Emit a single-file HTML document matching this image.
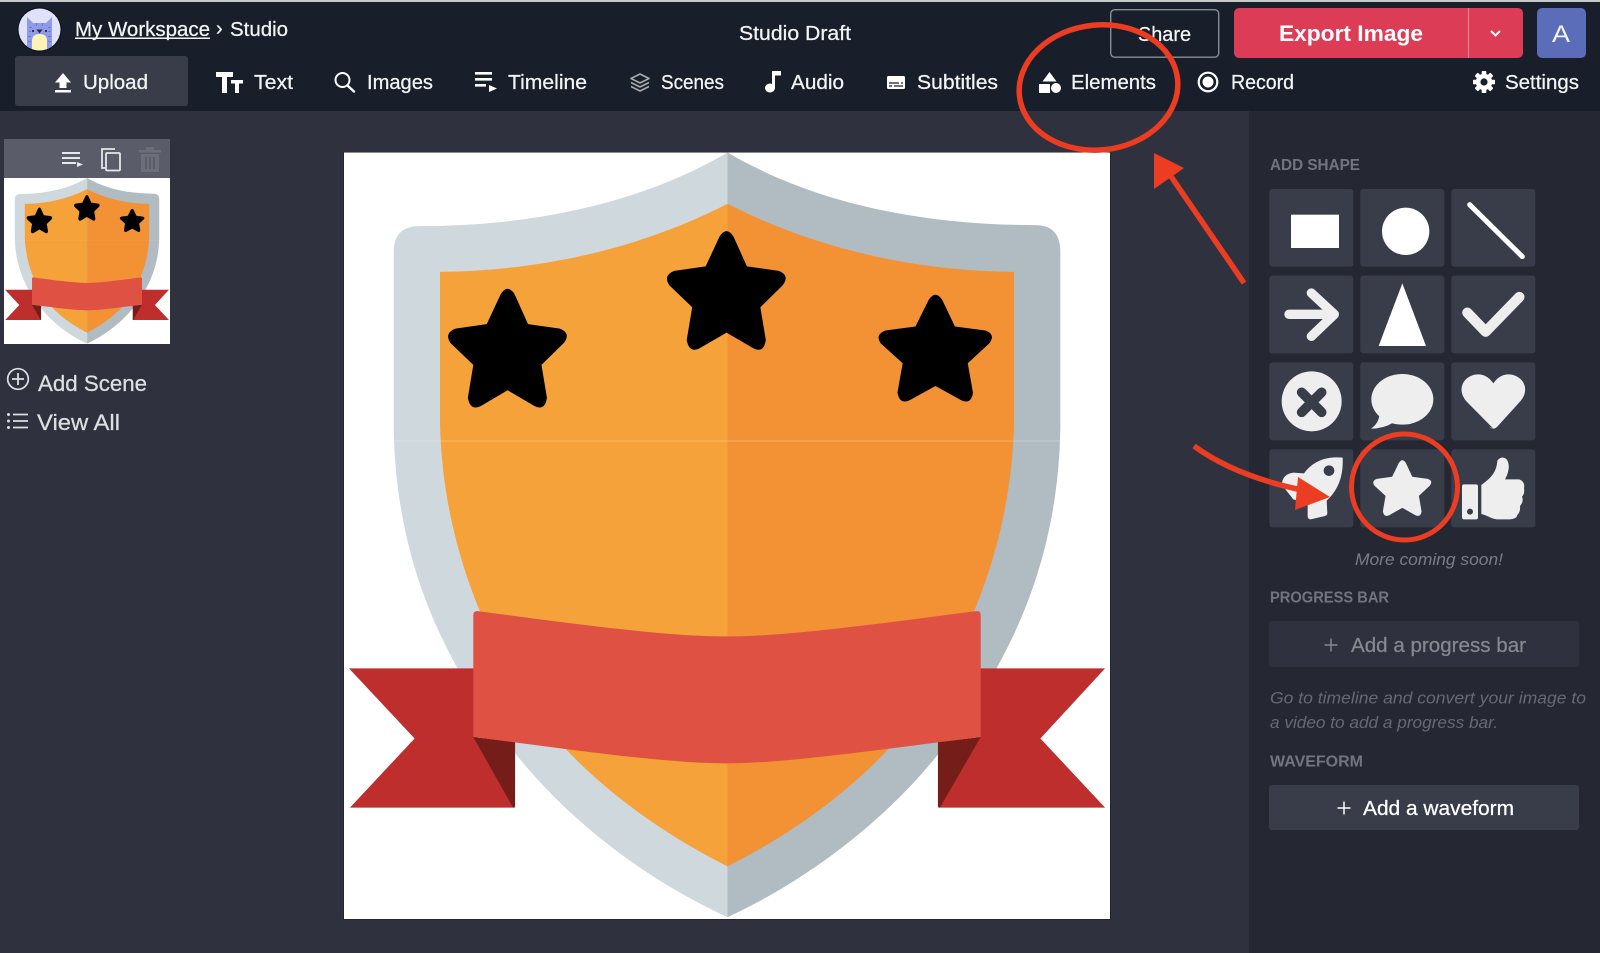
<!DOCTYPE html>
<html lang="en">
<head>
<meta charset="utf-8">
<title>Studio Draft</title>
<style>
html,body{margin:0;padding:0;width:1600px;height:953px;overflow:hidden;background:#2f323e}
svg{display:block}
text{font-family:"Liberation Sans",Arial,sans-serif;fill:#fff}
.n{font-size:20px;fill:#f4f4f5;stroke:#f4f4f5;stroke-width:.25px}
.l{font-size:16px;fill:#72757f;font-weight:700}
.i{font-size:17px;font-style:italic;fill:#666973}
</style>
</head>
<body>
<svg xmlns="http://www.w3.org/2000/svg" width="1600" height="953" viewBox="0 0 1600 953">
<defs>
<path id="st" d="M323 290Q337 268 351 290L378 350L442 359Q465 368 450 388L405 432L416 498Q412 526 390 514L337 483L284 514Q262 526 257 498L268 432L222 388Q209 368 232 359L295 350Z"/>
<g id="logo">
  <path fill="#cfd8dc" d="M779 5C600 110 380 153 160 153Q108 153 108 205L108 560C112 800 190 1010 350 1210C460 1350 620 1470 779 1542Z"/>
  <path fill="#b1bcc2" d="M779 5C958 110 1178 151 1398 151Q1448 151 1448 205L1448 560C1444 800 1366 1010 1206 1210C1096 1350 936 1470 779 1542Z"/>
  <path fill="#f5a23a" d="M779 108C600 200 400 243 201 245L201 550C205 720 250 880 330 1030C420 1210 600 1350 779 1440Z"/>
  <path fill="#f29234" d="M779 108C958 200 1158 243 1355 245L1355 550C1351 720 1306 880 1226 1030C1136 1210 958 1350 779 1440Z"/>
  <rect x="108" y="584" width="1340" height="2" fill="#fff" opacity=".25"/>
  <use href="#st"/>
  <use href="#st" x="440" y="-116"/>
  <use href="#st" transform="translate(1197 290) scale(.955 .9) translate(-337 -278)"/>
  <path fill="#bd2e2d" d="M18 1042H275V1180L352 1322H20L150 1183Z"/>
  <path fill="#bd2e2d" d="M1538 1042H1280V1180L1202 1322H1538L1408 1183Z"/>
  <path fill="#751d18" d="M268 1180L352 1190V1320L348 1322Z"/>
  <path fill="#751d18" d="M1288 1180L1202 1190V1320L1206 1322Z"/>
  <path fill="#df5142" d="M268 935Q268 926 277 927C450 950 650 978 779 978C900 978 1100 950 1279 927Q1288 926 1288 935V1180C1100 1203 900 1233 779 1233C650 1233 450 1203 268 1180Z"/>
</g>
<clipPath id="av"><circle cx="39.5" cy="29.5" r="21"/></clipPath>
</defs>

<!-- base panels -->
<rect width="1600" height="953" fill="#2f323e"/>
<rect x="1249" y="111" width="351" height="842" fill="#252833"/>
<rect width="1600" height="111" fill="#191e2b"/>
<rect width="1600" height="2" fill="#c9cacc"/>

<!-- avatar -->
<circle cx="39.5" cy="29.5" r="22" fill="#0d0f16"/>
<circle cx="39.5" cy="29.5" r="21" fill="#e0e2fb"/>
<g clip-path="url(#av)">
  <path fill="#8f9be8" d="M27 17L33 23H46L52 17V52H27Z"/>
  <path fill="#6a78d6" d="M29 27h3v1h-3zM29 31h2v1h-2zM48 27h3v1h-3zM48 31h3v1h-3zM36 23h1v3h-1zM42 23h1v3h-1zM28 36h3v1h-3zM48 36h3v1h-3zM28 41h3v1h-3zM48 41h3v1h-3z"/>
  <path fill="#fdf3b5" d="M32 52V41Q32 34 39.5 34T47 41V52Z"/>
  <path fill="#2a2a38" d="M36.500 29.500H42.500L39.5 33.5Z"/>
  <circle cx="33" cy="31" r="1.100" fill="#2a2a38"/><circle cx="46" cy="31" r="1.100" fill="#2a2a38"/>
</g>

<!-- row 1 -->
<text class="n" x="75" y="36" textLength="135" lengthAdjust="spacingAndGlyphs">My Workspace</text>
<rect x="75" y="37.5" width="135" height="1.5" fill="#f4f4f5"/>
<text class="n" x="216" y="35">›</text>
<text class="n" x="230" y="36" textLength="58" lengthAdjust="spacingAndGlyphs">Studio</text>
<text class="n" x="739" y="40" textLength="112" lengthAdjust="spacingAndGlyphs">Studio Draft</text>

<rect x="1110.7" y="9.7" width="108" height="47.5" rx="4" fill="none" stroke="#8b8d94" stroke-width="1.4"/>
<text class="n" x="1138" y="41" textLength="53" lengthAdjust="spacingAndGlyphs">Share</text>

<rect x="1234" y="8" width="289" height="50" rx="5" fill="#dd3c56"/>
<rect x="1468" y="8" width="1" height="50" fill="#ee8b9b"/>
<text x="1279" y="41" font-size="22" font-weight="700" textLength="144" lengthAdjust="spacingAndGlyphs">Export Image</text>
<path d="M1491 31L1495.5 35.5L1500 31" fill="none" stroke="#fff" stroke-width="2"/>
<rect x="1537" y="8" width="49" height="50" rx="5" fill="#5b6cb8"/>
<text x="1552" y="42" font-size="24" textLength="18" lengthAdjust="spacingAndGlyphs" style="fill:#f2f3fa">A</text>

<!-- row 2 -->
<rect x="15" y="56" width="173" height="50" rx="3" fill="#393d4a"/>
<path fill="#fff" d="M63 73L71 82.5H66.5V88H59.5V82.5H55ZM55 90H71V92.5H55Z"/>
<text class="n" x="83" y="89" textLength="65" lengthAdjust="spacingAndGlyphs">Upload</text>

<path fill="#fff" d="M216 72H233V77H227V93H222V77H216ZM231 80H243V83.5H239V93H235V83.5H231Z"/>
<text class="n" x="254" y="89" textLength="39" lengthAdjust="spacingAndGlyphs">Text</text>

<circle cx="342.500" cy="80" r="7" fill="none" stroke="#fff" stroke-width="2"/>
<path d="M347.500 85.500L354 91.500" stroke="#fff" stroke-width="2.4" stroke-linecap="round"/>
<text class="n" x="367" y="89" textLength="66" lengthAdjust="spacingAndGlyphs">Images</text>

<path fill="#fff" d="M475 72H492V74.6H475ZM475 78H492V80.6H475ZM475 84H486V86.6H475ZM489 85L497 88.5L489 92Z"/>
<text class="n" x="508" y="89" textLength="79" lengthAdjust="spacingAndGlyphs">Timeline</text>

<g fill="none" stroke="#a9aaae" stroke-width="1.600" stroke-linejoin="round">
  <path d="M640 74L649 78.500L640 83L631 78.500Z"/>
  <path d="M631 82.500L640 87L649 82.500"/>
  <path d="M631 86.500L640 91L649 86.500"/>
</g>
<text class="n" x="661" y="89" textLength="63" lengthAdjust="spacingAndGlyphs">Scenes</text>

<ellipse cx="770" cy="88" rx="5" ry="4.5" fill="#fff"/>
<path fill="#fff" d="M772 71H781V75.5H775V88H772Z"/>
<text class="n" x="791" y="89" textLength="53" lengthAdjust="spacingAndGlyphs">Audio</text>

<rect x="887" y="76" width="18" height="13" rx="1.5" fill="#fff"/>
<path d="M889 83H899M901 83H903M889 86H892M894 86H903" stroke="#191e2b" stroke-width="1.2"/>
<text class="n" x="917" y="89" textLength="81" lengthAdjust="spacingAndGlyphs">Subtitles</text>

<path fill="#fff" d="M1049.5 72L1056.500 81.500H1042.500ZM1039 84H1050V93H1039Z"/>
<circle cx="1056" cy="88" r="5" fill="#fff"/>
<text class="n" x="1071" y="89" textLength="85" lengthAdjust="spacingAndGlyphs">Elements</text>

<circle cx="1208" cy="82" r="9.3" fill="none" stroke="#fff" stroke-width="2.2"/>
<circle cx="1208" cy="82" r="5.5" fill="#fff"/>
<text class="n" x="1231" y="89" textLength="63" lengthAdjust="spacingAndGlyphs">Record</text>

<g fill="#fff" transform="translate(1484 82)">
  <circle r="8.2"/>
  <rect x="-2.3" y="-11" width="4.6" height="5" rx=".8"/>
  <rect x="-2.3" y="-11" width="4.6" height="5" rx=".8" transform="rotate(45)"/>
  <rect x="-2.3" y="-11" width="4.6" height="5" rx=".8" transform="rotate(90)"/>
  <rect x="-2.3" y="-11" width="4.6" height="5" rx=".8" transform="rotate(135)"/>
  <rect x="-2.3" y="-11" width="4.6" height="5" rx=".8" transform="rotate(180)"/>
  <rect x="-2.3" y="-11" width="4.6" height="5" rx=".8" transform="rotate(225)"/>
  <rect x="-2.3" y="-11" width="4.6" height="5" rx=".8" transform="rotate(270)"/>
  <rect x="-2.3" y="-11" width="4.6" height="5" rx=".8" transform="rotate(315)"/>
  <circle r="3.6" fill="#191e2b"/>
</g>
<text class="n" x="1505" y="89" textLength="74" lengthAdjust="spacingAndGlyphs">Settings</text>

<!-- scene thumbnail -->
<rect x="4" y="139" width="166" height="39" fill="#5a5d69"/>
<path fill="#e8e8ea" d="M62 152H80V154H62ZM62 157H80V159H62ZM62 162H76V164H62ZM77 162L83 164.5L77 167Z"/>
<g fill="none" stroke="#e6e6e8" stroke-width="1.8">
  <path d="M105 168H102V149H115"/>
  <rect x="106" y="153" width="14" height="17.5" rx="1"/>
</g>
<g fill="#6c6f79">
  <rect x="139" y="150" width="22" height="2.5"/><rect x="146" y="147" width="8" height="3"/>
  <path d="M141 154H159V172H141ZM145 157V169H147V157ZM149 157V169H151V157ZM153 157V169H155V157Z" fill-rule="evenodd"/>
</g>
<rect x="4" y="178" width="166" height="166" fill="#fff"/>
<svg x="4" y="178" width="166" height="166" viewBox="8 5 1540 1540"><use href="#logo"/></svg>

<circle cx="18" cy="379" r="10.3" fill="none" stroke="#dedfe2" stroke-width="1.7"/>
<path d="M18 373V385M12 379H24" stroke="#dedfe2" stroke-width="1.8"/>
<text x="38" y="391" font-size="22" style="fill:#dedfe2;stroke:#dedfe2;stroke-width:.25px" textLength="109" lengthAdjust="spacingAndGlyphs">Add Scene</text>
<path d="M13 414.5H28M13 421H28M13 427.500H28" stroke="#dedfe2" stroke-width="1.8"/>
<circle cx="8.500" cy="414.5" r="1.500" fill="#dedfe2"/><circle cx="8.500" cy="421" r="1.500" fill="#dedfe2"/><circle cx="8.500" cy="427.500" r="1.500" fill="#dedfe2"/>
<text x="37" y="430" font-size="22" style="fill:#dedfe2;stroke:#dedfe2;stroke-width:.25px" textLength="83" lengthAdjust="spacingAndGlyphs">View All</text>

<!-- canvas -->
<rect x="343.500" y="152" width="767" height="767.500" fill="#14161d"/>
<rect x="344" y="152.500" width="766" height="766.500" fill="#fff"/>
<svg x="340" y="150" width="780" height="780" viewBox="0 0 1568 1568"><use href="#logo"/></svg>

<!-- right panel -->
<text class="l" x="1270" y="170" textLength="90" lengthAdjust="spacingAndGlyphs">ADD SHAPE</text>
<g transform="translate(1240 140) scale(.33333)">
  <g fill="#393d4a">
    <rect x="88" y="147" width="252" height="233" rx="9"/><rect x="361" y="147" width="252" height="233" rx="9"/><rect x="634" y="147" width="252" height="233" rx="9"/>
    <rect x="88" y="407" width="252" height="233" rx="9"/><rect x="361" y="407" width="252" height="233" rx="9"/><rect x="634" y="407" width="252" height="233" rx="9"/>
    <rect x="88" y="667" width="252" height="234" rx="9"/><rect x="361" y="667" width="252" height="234" rx="9"/><rect x="634" y="667" width="252" height="234" rx="9"/>
    <rect x="88" y="928" width="252" height="234" rx="9"/><rect x="361" y="928" width="252" height="234" rx="9"/><rect x="634" y="928" width="252" height="234" rx="9"/>
  </g>
  <rect x="153" y="224" width="144" height="100" fill="#fff"/>
  <circle cx="497" cy="274" r="71" fill="#fff"/>
  <path d="M689 194L847 350" stroke="#fff" stroke-width="15" stroke-linecap="round"/>
  <g fill="none" stroke="#eee" stroke-linecap="round" stroke-linejoin="round">
    <path stroke-width="28" d="M147 523H270"/>
    <path stroke-width="28" d="M214 459L283 523L214 589"/>
    <path stroke-width="31" d="M682 518L737 575L838 471"/>
  </g>
  <path fill="#fff" d="M487 430L558 618H416Z"/>
  <circle cx="215" cy="784" r="90" fill="#eee"/>
  <path d="M185 757L245 817M245 757L185 817" stroke="#393d4a" stroke-width="29" stroke-linecap="round"/>
  <ellipse cx="487" cy="778" rx="93" ry="76" fill="#eee"/>
  <path fill="#eee" d="M418 825Q416 850 393 866Q430 866 460 848Z"/>
  <path fill="#eee" d="M760 866L680 785C645 745 675 703 715 703C735 703 750 715 760 730C770 715 785 703 805 703C845 703 875 745 840 785L772 860Q760 872 748 860Z"/>
  <!-- rocket -->
  <path fill="#eee" d="M308 953C310 1000 300 1045 260 1082L262 1120Q262 1125 255 1128L212 1138Q203 1138 203 1128L203 1092L160 1078L125 1034Q128 1002 160 998L192 1000C220 962 260 948 308 953Z"/>
  <circle cx="267" cy="992" r="16" fill="#393d4a"/>
  <!-- star -->
  <use href="#st" fill="#eee" transform="translate(487 960) scale(.73 .7) translate(-337 -278)"/>
  <!-- thumbs -->
  <rect x="666" y="1033" width="48" height="105" rx="6" fill="#eee"/>
  <circle cx="690" cy="1115" r="9" fill="#393d4a"/>
  <path fill="#eee" d="M724 1035C760 1010 770 990 772 962Q785 945 800 958C812 975 805 1000 795 1018L838 1018Q856 1025 852 1045Q855 1060 846 1070Q852 1085 840 1098Q842 1115 832 1125Q830 1137 810 1138L770 1138C750 1135 740 1125 724 1122Z"/>
</g>

<text class="i" x="1355" y="565" textLength="148" lengthAdjust="spacingAndGlyphs" style="fill:#7a7d87">More coming soon!</text>
<text class="l" x="1270" y="602.500" textLength="119" lengthAdjust="spacingAndGlyphs">PROGRESS BAR</text>
<rect x="1269" y="621" width="310" height="46" rx="3" fill="#2f323e"/>
<path d="M1331 638.500V651.500M1324.500 645H1337.500" stroke="#868890" stroke-width="1.500"/>
<text x="1351" y="652" font-size="20" style="fill:#868890;stroke:#868890;stroke-width:.25px" textLength="175" lengthAdjust="spacingAndGlyphs">Add a progress bar</text>
<text class="i" x="1270" y="703.500" textLength="316" lengthAdjust="spacingAndGlyphs">Go to timeline and convert your image to</text>
<text class="i" x="1270" y="728" textLength="228" lengthAdjust="spacingAndGlyphs">a video to add a progress bar.</text>
<text class="l" x="1270" y="766.500" textLength="93" lengthAdjust="spacingAndGlyphs">WAVEFORM</text>
<rect x="1269" y="785" width="310" height="45" rx="3" fill="#393d4a"/>
<path d="M1344 801.500V814.500M1337.500 808H1350.500" stroke="#fff" stroke-width="1.500"/>
<text x="1363" y="815" font-size="20" style="stroke:#fff;stroke-width:.25px" textLength="151" lengthAdjust="spacingAndGlyphs">Add a waveform</text>

<!-- annotations -->
<g fill="none" stroke="#ec3d22">
  <ellipse cx="1098.500" cy="87.500" rx="79.500" ry="62.500" stroke-width="5.500" transform="rotate(-6 1098.500 87.500)"/>
  <ellipse cx="1404.500" cy="487" rx="53" ry="53" stroke-width="5"/>
  <path d="M1244 283L1168 172" stroke-width="5.500"/>
  <path d="M1194 446Q1235 476 1302 490" stroke-width="5.500"/>
</g>
<path fill="#ec3d22" d="M1154 153L1154 189L1184 168Z"/>
<path fill="#ec3d22" d="M1298 477L1330 497L1295 510Z"/>
</svg>
</body>
</html>
